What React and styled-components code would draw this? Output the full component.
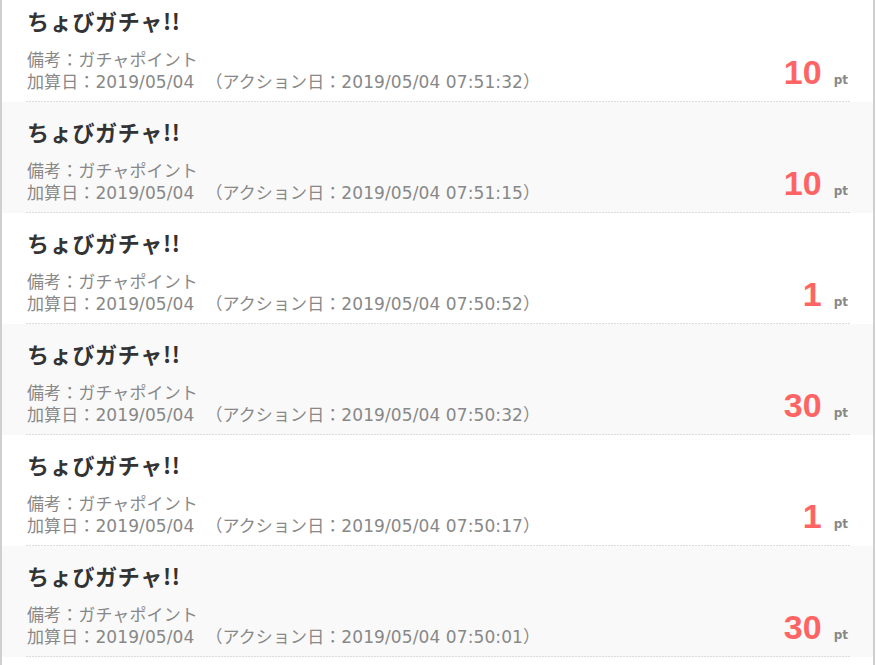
import React from 'react';
import styled, { createGlobalStyle } from 'styled-components';

const GlobalStyle = createGlobalStyle`
    html, body {
        margin: 0;
        padding: 0;
        background: #fff;
        overflow: hidden;
    }
    body {
        font-family: "DejaVu Sans", "Noto Sans CJK JP", sans-serif;
    }
`;

const history = [
    { point: 10, date: '2019/05/04', action: '2019/05/04 07:51:32' },
    { point: 10, date: '2019/05/04', action: '2019/05/04 07:51:15' },
    { point: 1, date: '2019/05/04', action: '2019/05/04 07:50:52' },
    { point: 30, date: '2019/05/04', action: '2019/05/04 07:50:32' },
    { point: 1, date: '2019/05/04', action: '2019/05/04 07:50:17' },
    { point: 30, date: '2019/05/04', action: '2019/05/04 07:50:01' },
];

function App() {
    return (
        <>
            <GlobalStyle />
            <MainBody>
                <List>
                    {history.map((item, i) => (
                        <Row key={i} $striped={i % 2 === 1}>
                            <Inner>
                                <Title>ちょびガチャ!!</Title>
                                <Bottom>
                                    <Memo>
                                        <Line>備考：ガチャポイント</Line>
                                        <Line>加算日：{item.date}{'\u00a0 '}（アクション日：{item.action}）</Line>
                                    </Memo>
                                    <Points>
                                        <Number>{item.point}</Number>
                                        <Unit>pt</Unit>
                                    </Points>
                                </Bottom>
                            </Inner>
                        </Row>
                    ))}
                </List>
            </MainBody>
        </>
    );
}

const MainBody = styled.div`
    width: 871px;
    height: 665px;
    border-left: 2px solid #cfcfcf;
    border-right: 2px solid #cfcfcf;
    overflow: hidden;
`;
const List = styled.ul`
    list-style: none;
    margin: -9px 0 0;
    padding: 0;
`;
const Row = styled.li`
    background: ${p => (p.$striped ? '#f9f9f9' : '#fff')};
    padding: 15px 23px 0 24px;
`;
const Inner = styled.div`
    background-image: repeating-linear-gradient(to right, #dcdcdc 0 2px, transparent 2px 3px);
    background-size: 100% 1px;
    background-repeat: no-repeat;
    background-position: left bottom;
    padding-bottom: 9px;
`;
const Title = styled.h3`
    margin: 0 0 15px 1px;
    font-family: "Noto Sans CJK JP", sans-serif;
    font-size: 22px;
    line-height: 28px;
    font-weight: 700;
    letter-spacing: 0.7px;
    color: #333;
`;
const Bottom = styled.div`
    display: flex;
    justify-content: space-between;
    align-items: flex-end;
`;
const Memo = styled.div`
    color: #888;
    font-size: 17px;
    line-height: 22px;
    letter-spacing: 0.1px;
    margin-left: 1px;
`;
const Line = styled.p`
    margin: 0;
`;
const Points = styled.div`
    display: flex;
    align-items: baseline;
    gap: 12px;
    padding-right: 2px;
    margin-bottom: 4px;
    line-height: 1;
`;
const Number = styled.span`
    font-family: "Liberation Sans", Arial, sans-serif;
    font-size: 34px;
    font-weight: 700;
    color: #ff6464;
`;
const Unit = styled.span`
    font-family: "DejaVu Sans", sans-serif;
    font-size: 12px;
    font-weight: 700;
    color: #888;
`;

export default App;
